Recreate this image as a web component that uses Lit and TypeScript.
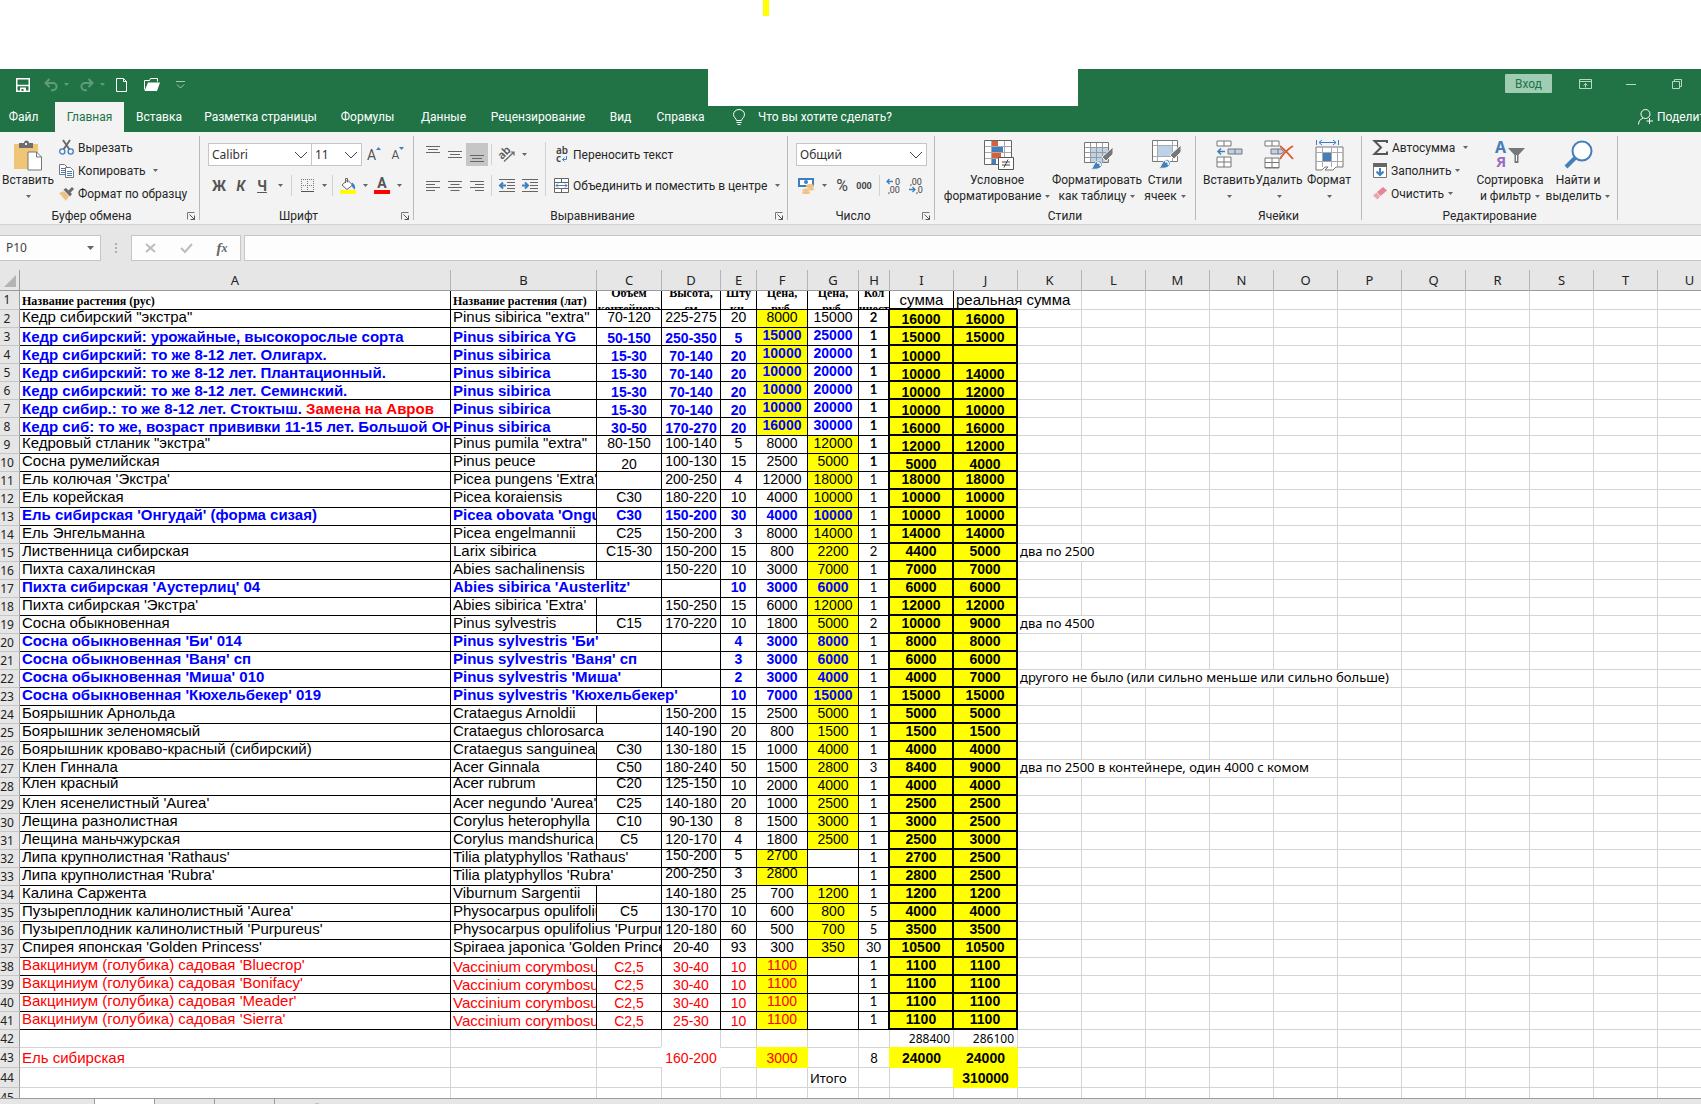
import { LitElement, html, svg, css, nothing, type TemplateResult } from "lit";
import { customElement } from "lit/decorators.js";
import { classMap } from "lit/directives/class-map.js";

const COLUMNS = "ABCDEFGHIJKLMNOPQRSTU".split("");

const ROWS: string[][] = [
  ["Название растения (рус)", "Название растения (лат)", "Объем контейнера", "Высота, см", "Шту ки,", "Цена, руб.", "Цена, руб.", "Кол ичест", "сумма", "реальная сумма"],
  ['Кедр сибирский "экстра"', 'Pinus sibirica "extra"', "70-120", "225-275", "20", "8000", "15000", "2", "16000", "16000"],
  ["Кедр сибирский: урожайные, высокорослые сорта", "Pinus sibirica YG", "50-150", "250-350", "5", "15000", "25000", "1", "15000", "15000"],
  ["Кедр сибирский: то же 8-12 лет. Олигарх.", "Pinus sibirica", "15-30", "70-140", "20", "10000", "20000", "1", "10000", ""],
  ["Кедр сибирский: то же 8-12 лет. Плантационный.", "Pinus sibirica", "15-30", "70-140", "20", "10000", "20000", "1", "10000", "14000"],
  ["Кедр сибирский: то же 8-12 лет. Семинский.", "Pinus sibirica", "15-30", "70-140", "20", "10000", "20000", "1", "10000", "12000"],
  ["Кедр сибир.: то же 8-12 лет. Стоктыш. |Замена на Авров", "Pinus sibirica", "15-30", "70-140", "20", "10000", "20000", "1", "10000", "10000"],
  ["Кедр сиб: то же, возраст прививки 11-15 лет. Большой ОН.", "Pinus sibirica", "30-50", "170-270", "20", "16000", "30000", "1", "16000", "16000"],
  ['Кедровый стланик "экстра"', 'Pinus pumila "extra"', "80-150", "100-140", "5", "8000", "12000", "1", "12000", "12000"],
  ["Сосна румелийская", "Pinus peuce", "20", "100-130", "15", "2500", "5000", "1", "5000", "4000"],
  ["Ель колючая 'Экстра'", "Picea pungens 'Extra'", "", "200-250", "4", "12000", "18000", "1", "18000", "18000"],
  ["Ель корейская", "Picea koraiensis", "C30", "180-220", "10", "4000", "10000", "1", "10000", "10000"],
  ["Ель сибирская 'Онгудай' (форма сизая)", "Picea obovata 'Ongudai'", "C30", "150-200", "30", "4000", "10000", "1", "10000", "10000"],
  ["Ель Энгельманна", "Picea engelmannii", "C25", "150-200", "3", "8000", "14000", "1", "14000", "14000"],
  ["Лиственница сибирская", "Larix sibirica", "C15-30", "150-200", "15", "800", "2200", "2", "4400", "5000", "два по 2500"],
  ["Пихта сахалинская", "Abies sachalinensis", "", "150-220", "10", "3000", "7000", "1", "7000", "7000"],
  ["Пихта сибирская 'Аустерлиц' 04", "Abies sibirica 'Austerlitz'", "", "", "10", "3000", "6000", "1", "6000", "6000"],
  ["Пихта сибирская 'Экстра'", "Abies sibirica 'Extra'", "", "150-250", "15", "6000", "12000", "1", "12000", "12000"],
  ["Сосна обыкновенная", "Pinus sylvestris", "C15", "170-220", "10", "1800", "5000", "2", "10000", "9000", "два по 4500"],
  ["Сосна обыкновенная 'Би' 014", "Pinus sylvestris 'Би'", "", "", "4", "3000", "8000", "1", "8000", "8000"],
  ["Сосна обыкновенная 'Ваня' сп", "Pinus sylvestris 'Ваня' сп", "", "", "3", "3000", "6000", "1", "6000", "6000"],
  ["Сосна обыкновенная 'Миша' 010", "Pinus sylvestris 'Миша'", "", "", "2", "3000", "4000", "1", "4000", "7000", "другого не было (или сильно меньше или сильно больше)"],
  ["Сосна обыкновенная 'Кюхельбекер' 019", "Pinus sylvestris 'Кюхельбекер'", "", "", "10", "7000", "15000", "1", "15000", "15000"],
  ["Боярышник Арнольда", "Crataegus Arnoldii", "", "150-200", "15", "2500", "5000", "1", "5000", "5000"],
  ["Боярышник зеленомясый", "Crataegus chlorosarca", "", "140-190", "20", "800", "1500", "1", "1500", "1500"],
  ["Боярышник кроваво-красный (сибирский)", "Crataegus sanguinea", "C30", "130-180", "15", "1000", "4000", "1", "4000", "4000"],
  ["Клен Гиннала", "Acer Ginnala", "C50", "180-240", "50", "1500", "2800", "3", "8400", "9000", "два по 2500 в контейнере, один 4000 с комом"],
  ["Клен красный", "Acer rubrum", "C20", "125-150", "10", "2000", "4000", "1", "4000", "4000"],
  ["Клен ясенелистный 'Aurea'", "Acer negundo 'Aurea'", "C25", "140-180", "20", "1000", "2500", "1", "2500", "2500"],
  ["Лещина разнолистная", "Corylus heterophylla", "C10", "90-130", "8", "1500", "3000", "1", "3000", "2500"],
  ["Лещина маньчжурская", "Corylus mandshurica", "C5", "120-170", "4", "1800", "2500", "1", "2500", "3000"],
  ["Липа крупнолистная 'Rathaus'", "Tilia platyphyllos 'Rathaus'", "", "150-200", "5", "2700", "", "1", "2700", "2500"],
  ["Липа крупнолистная 'Rubra'", "Tilia platyphyllos 'Rubra'", "", "200-250", "3", "2800", "", "1", "2800", "2500"],
  ["Калина Саржента", "Viburnum Sargentii", "", "140-180", "25", "700", "1200", "1", "1200", "1200"],
  ["Пузыреплодник калинолистный 'Aurea'", "Physocarpus opulifolius 'Aurea'", "C5", "130-170", "10", "600", "800", "5", "4000", "4000"],
  ["Пузыреплодник калинолистный 'Purpureus'", "Physocarpus opulifolius 'Purpureus'", "", "120-180", "60", "500", "700", "5", "3500", "3500"],
  ["Спирея японская 'Golden Princess'", "Spiraea japonica 'Golden Princess'", "", "20-40", "93", "300", "350", "30", "10500", "10500"],
  ["Вакциниум (голубика) садовая 'Bluecrop'", "Vaccinium corymbosum", "C2,5", "30-40", "10", "1100", "", "1", "1100", "1100"],
  ["Вакциниум (голубика) садовая 'Bonifacy'", "Vaccinium corymbosum", "C2,5", "30-40", "10", "1100", "", "1", "1100", "1100"],
  ["Вакциниум (голубика) садовая 'Meader'", "Vaccinium corymbosum", "C2,5", "30-40", "10", "1100", "", "1", "1100", "1100"],
  ["Вакциниум (голубика) садовая 'Sierra'", "Vaccinium corymbosum", "C2,5", "25-30", "10", "1100", "", "1", "1100", "1100"],
  ["", "", "", "", "", "", "", "", "288400", "286100"],
  ["Ель сибирская", "", "", "160-200", "", "3000", "", "8", "24000", "24000"],
  ["", "", "", "", "", "", "Итого", "", "", "310000"],
  [],
];

/* How many columns the text of a cell runs across. */
const SPANS: Record<string, number> = {
  B17: 2, B20: 2, B21: 2, B22: 2, B23: 3, B25: 2, B32: 2, B33: 2, B36: 2, B37: 2,
  K15: 2, K19: 2, K22: 6, K27: 5,
};

const BLUE_ROWS = new Set([3, 4, 5, 6, 7, 8, 13, 17, 20, 21, 22, 23]);

function cellClasses(col: string, row: number): Record<string, boolean> {
  const main = "ABCDEFG".includes(col);
  const sums = col === "I" || col === "J";
  const inTable = row >= 2 && row <= 41;
  const between = (a: number, b: number) => row >= a && row <= b;
  const yellow =
    (col === "F" && (between(2, 8) || between(32, 33) || between(38, 41))) ||
    (col === "G" && (between(9, 31) || between(34, 37))) ||
    (sums && inTable);
  const loose = (row === 43 && (col === "F" || sums)) || (row === 44 && col === "J");
  const up = (row === 28 && "ABCD".includes(col)) || (between(32, 33) && "DEF".includes(col));
  const low =
    (between(3, 8) && "CDE".includes(col)) || (between(4, 10) && sums) || (row === 10 && col === "C") ||
    (row === 1 && "AB".includes(col)) || between(43, 44);
  const mid =
    (between(3, 8) && "AB".includes(col)) || (between(2, 3) && sums) ||
    (between(38, 41) && "BCDE".includes(col)) || (row === 1 && sums) || row === 42 || row === 45;
  return {
    center: !("ABK".includes(col) || (col === "J" && row === 1) || (row === 44 && col === "G")),
    right: row === 42,
    names: col === "A" || col === "B" || (sums && row === 1),
    ruled: between(1, 41) && (main || col === "H" || (sums && row > 1)),
    thick: sums && inTable,
    "thick-right": col === "H" && inTable,
    "thick-bottom": sums && row === 1,
    "plain-right": col === "J" && row === 1,
    "thin-right": col === "I" && row === 1,
    blue: main && BLUE_ROWS.has(row),
    red: main && between(38, 43),
    bold: (sums && row > 1 && row !== 42) || (col === "H" && between(2, 10)),
    small: col === "H",
    note: col === "K" || (row === 44 && col === "G"),
    total: row === 42,
    serif: row === 1 && (main || col === "H"),
    wrap: row === 1 && "CDEFGH".includes(col),
    yellow,
    loose,
    blank: row === 43 && col === "D",
    up,
    low,
    mid,
  };
}

const icon = (w: number, h: number, body: TemplateResult) =>
  html`<svg width=${w} height=${h} viewBox="0 0 ${w} ${h}" fill="none" aria-hidden="true">${body}</svg>`;

const caret = icon(5, 3, svg`<path d="M0 0h5L2.500 3z" fill="#666"/>`);
const chevron = icon(14, 8, svg`<path d="M1 1l6 6 6-6" stroke="#444"/>`);

const I = {
  save: icon(14, 14, svg`<path d="M.75.75h12.500v12.500H.75z" stroke="#fff" stroke-width="1.500"/><path d="M1 7.500h12" stroke="#fff" stroke-width="1.500"/><path d="M4 13v-3.500h6V13" fill="#fff"/><path d="M5.500 11h2v2h-2z" fill="#217346"/>`),
  undo: icon(14, 13, svg`<path d="M5.500 1L1.500 5l4 4M2 5h7a3.600 3.600 0 010 7.200H7" stroke="#5f9c7b" stroke-width="2"/>`),
  redo: icon(14, 13, svg`<path d="M8.500 1l4 4-4 4M12 5H5a3.600 3.600 0 000 7.200h2" stroke="#5f9c7b" stroke-width="2"/>`),
  dimCaret: icon(5, 3, svg`<path d="M0 0h5L2.500 3z" fill="#5f9c7b"/>`),
  file: icon(12, 14, svg`<path d="M.5.5h7l3 3v10H.5zM7.500.5v3h3" stroke="#fff"/>`),
  folder: icon(16, 13, svg`<path d="M.5 11.500v-9h5l1-2h7v3" stroke="#fff"/><path d="M4 4.500h12L13 13H.5z" fill="#fff"/>`),
  more: icon(9, 8, svg`<path d="M0 .5h9M1 3.500l3.500 3.500L8 3.500" stroke="#9fcdb3"/>`),
  ribbonToggle: icon(13, 10, svg`<path d="M.5.5h12v9H.5zM0 2.500h13M6.500 8.500v-4M4.500 6.500l2-2 2 2" stroke="#b5d9c4"/>`),
  minimize: icon(10, 10, svg`<path d="M0 5.500h10" stroke="#b5d9c4"/>`),
  restore: icon(10, 10, svg`<path d="M.5 2.500h7v7h-7zM2.500 2V.5h7v7H8" stroke="#b5d9c4"/>`),
  bulb: icon(12, 16, svg`<path d="M3.500 11.500c0-2-3-3-3-6a5.500 5 0 0111 0c0 3-3 4-3 6zM3.500 13.500h5M4.500 15.500h3" stroke="#fff"/>`),
  share: icon(15, 16, svg`<circle cx="7.500" cy="5" r="4.500" stroke="#fff"/><path d="M.5 15.500c0-3 2-5.500 4.500-6.500M11.500 9v6M8.500 12h6.500" stroke="#fff"/>`),
  paste: icon(30, 31, svg`<path d="M1 4h24v25H1z" fill="#efc677"/><path d="M6 3h5a2.500 2.500 0 015 0h4v5H6z" fill="#6d6d6d"/><path d="M12 3h2v2h-2z" fill="#f3f3f3"/><path d="M15 12h8.500l5 5v13H15z" fill="#fff" stroke="#777"/><path d="M23.500 12v5h5" stroke="#777"/>`),
  cut: icon(15, 15, svg`<path d="M4 0l6.500 9.500M11 0L4.500 9.500" stroke="#6a6a6a" stroke-width="2"/><circle cx="3.300" cy="11.500" r="2.600" stroke="#3f7fc0" stroke-width="1.300"/><circle cx="11.700" cy="11.500" r="2.600" stroke="#3f7fc0" stroke-width="1.300"/>`),
  copy: icon(15, 14, svg`<path d="M.5.5h5l3 3v7h-8z" fill="#fff" stroke="#777"/><path d="M2 4.500h4M2 6.500h4M2 8.500h4" stroke="#3f7fc0"/><path d="M6.500 3.500h5l3 3v7h-8z" fill="#fff" stroke="#777"/><path d="M8 7.500h5M8 9.500h5M8 11.500h5" stroke="#3f7fc0"/>`),
  brush: icon(15, 14, svg`<path d="M0 6l5-2 5 5-3 5z" fill="#efc283"/><path d="M4.500 2.500L7 1l6 6-2 2.500z" fill="#6a6a6a"/><path d="M10 5l4-4" stroke="#6a6a6a" stroke-width="3"/>`),
  launcher: icon(8, 8, svg`<path d="M.5 7.500V.5h7" stroke="#777"/><path d="M2.500 2.500l5 5M7.500 3.500v4h-4" stroke="#555"/>`),
  upMark: icon(5, 3, svg`<path d="M0 3h5L2.500 0z" fill="#3f7fc0"/>`),
  downMark: icon(5, 3, svg`<path d="M0 0h5L2.500 3z" fill="#3f7fc0"/>`),
  borders: icon(13, 13, svg`<path d="M.5 0v12M6.500 0v12M12.500 0v12M0 .5h13M0 6.500h13" stroke="#777" stroke-dasharray="1 1"/><path d="M0 12.500h13" stroke="#555"/>`),
  fill: icon(16, 16, svg`<path d="M0 12h16v4H0z" fill="#ff0"/><path d="M2 7l5.500-5 5 5-5.500 4.500z" fill="#fff" stroke="#666"/><path d="M5.500 5V.500h2v4" stroke="#666"/><path d="M12 5c2 1 3 3 2.500 6-1.500-1-2.500-3-2.500-6z" fill="#3f7fc0" stroke="#3f7fc0"/>`),
  top: icon(14, 7, svg`<path d="M0 .5h14M2 3.500h10M0 6.500h14" stroke="#666"/>`),
  left: icon(14, 10, svg`<path d="M0 .5h14M0 3.500h9M0 6.500h14M0 9.500h9" stroke="#666"/>`),
  middle: icon(14, 10, svg`<path d="M0 .5h14M2.500 3.500h9M0 6.500h14M2.500 9.500h9" stroke="#666"/>`),
  rightAl: icon(14, 10, svg`<path d="M0 .5h14M5 3.500h9M0 6.500h14M5 9.500h9" stroke="#666"/>`),
  orient: icon(17, 15, svg`<g transform="rotate(-45 8 8)"><text x="1" y="8" font-size="11" font-weight="600" font-family="Noto Sans, sans-serif" fill="#555">ab</text></g><path d="M5 14.500L15 5M11.500 5H15v3.500" stroke="#666" stroke-width="1.200"/>`),
  outdent: icon(16, 13, svg`<path d="M0 .5h16M8 3.500h8M8 6.500h8M8 9.500h8M0 12.500h16" stroke="#666"/><path d="M1 6.500h6M4 3.500l-3 3 3 3" stroke="#3f7fc0" stroke-width="2"/>`),
  indent: icon(16, 13, svg`<path d="M0 .5h16M8 3.500h8M8 6.500h8M8 9.500h8M0 12.500h16" stroke="#666"/><path d="M0 6.500h6M3 3.500l3 3-3 3" stroke="#3f7fc0" stroke-width="2"/>`),
  wrap: icon(15, 16, svg`<text x="2" y="7" font-size="10" font-weight="600" font-family="Noto Sans, sans-serif" fill="#444">ab</text><text x="2" y="15" font-size="10" font-weight="600" font-family="Noto Sans, sans-serif" fill="#444">c</text><path d="M12.500 9v3.500H8.500M10.500 10.500l-2 2 2 2" stroke="#3f7fc0"/>`),
  merge: icon(15, 15, svg`<path d="M.5.5h14v14H.5zM.5 4.500h14M.5 10.500h14M7.500.5v4M7.500 10.500v4" stroke="#666" fill="#fff"/><path d="M2 7.500h11M4 5.500l-2 2 2 2M11 5.500l2 2-2 2" stroke="#3f7fc0"/>`),
  money: icon(16, 16, svg`<path d="M1 1h14v7H1z" fill="#fff" stroke="#3f7fc0" stroke-width="2"/><circle cx="8" cy="4" r="2" fill="#3f7fc0"/><ellipse cx="12" cy="8" rx="4" ry="2" fill="#efc283"/><ellipse cx="12" cy="11" rx="4" ry="1.500" fill="#efc283"/><ellipse cx="8" cy="12" rx="4" ry="1.500" fill="#efc283" stroke="#f3f3f3" stroke-width=".5"/><ellipse cx="8" cy="14.500" rx="4" ry="1.500" fill="#efc283"/>`),
  moreDec: icon(15, 16, svg`<text x="8" y="7" font-size="9" font-family="Roboto, sans-serif" fill="#444">0</text><text x="1" y="15" font-size="9" font-family="Roboto, sans-serif" fill="#444">,00</text><path d="M0 3.500h6M2.500 1L0 3.500 2.500 6" stroke="#3f7fc0" stroke-width="1.300"/>`),
  lessDec: icon(15, 16, svg`<text x="1" y="7" font-size="9" font-family="Roboto, sans-serif" fill="#444">,00</text><text x="7" y="15" font-size="9" font-family="Roboto, sans-serif" fill="#444">,0</text><path d="M0 11.500h6M3.500 9L6 11.500 3.500 14" stroke="#3f7fc0" stroke-width="1.300"/>`),
  cond: icon(30, 30, svg`<path d="M.5.500h27v24H.5z" fill="#fff"/><path d="M8 1h6v5H8zM8 13h9v5H8z" fill="#d8613c"/><path d="M8 7h11v5H8zM8 19h4v5H8z" fill="#457fb9"/><path d="M7.500 0v25M20.500 0v25M0 6.500h28M0 12.500h28M0 18.500h28" stroke="#aaa"/><path d="M.5.500h27v24H.5z" stroke="#666"/><path d="M14.500 17.500h15v12h-15z" fill="#fff" stroke="#555"/><path d="M18 22h8M18 25h8M24 19.500l-4 8" stroke="#444"/>`),
  asTable: icon(30, 29, svg`<path d="M.5 2.500h24v20H.5z" fill="#fff"/><path d="M7 8h18v14H7z" fill="#bdd2e8"/><path d="M6.500 2v20M12.500 2v20M18.500 2v20M0 7.500h25M0 12.500h25M0 17.500h25" stroke="#999"/><path d="M.5 2.500h24v20H.5z" stroke="#777"/><path d="M29 7v7l-7 7-4-4z" fill="#777" stroke="#f3f3f3"/><path d="M6 29c4 0 3-7 8-8 4-1 6 4 2 7-3 2-7 1-10 1z" fill="#457fb9" stroke="#f3f3f3"/><path d="M13 23c3-1 4 1 3 3" stroke="#fff" stroke-width="1.500"/>`),
  cellStyles: icon(30, 29, svg`<path d="M.5.500h25v21H.5z" fill="#fff"/><path d="M5.500 0v22M20.500 0v22M0 5.500h26M0 16.500h26" stroke="#aaa"/><path d="M6 6h14v10H6z" fill="#bdd2e8"/><path d="M.5.500h25v21H.5z" stroke="#777"/><path d="M29 5v7l-7 7-4-4z" fill="#777" stroke="#f3f3f3"/><path d="M6 28c4 0 3-7 8-8 4-1 6 4 2 7-3 2-7 1-10 1z" fill="#457fb9" stroke="#f3f3f3"/><path d="M13 22c3-1 4 1 3 3" stroke="#fff" stroke-width="1.500"/>`),
  insert: icon(27, 28, svg`<path d="M1 1h14v5H1zM8 1v5M1 17h14v10H1zM8 17v10M1 22h14" stroke="#777" fill="#fff"/><path d="M12 9h14v5H12zM19 9v5" fill="#bdd2e8" stroke="#777"/><path d="M2 11.500h7M5 8.500l-3 3 3 3" stroke="#3f7fc0" stroke-width="1.600"/>`),
  remove: icon(30, 28, svg`<path d="M1 1h14v5H1zM8 1v5M1 18h14v10H1zM8 18v9M1 22.500h14M1 27.500h14" stroke="#777" fill="#fff"/><path d="M7 9h10l3 2.500-3 2.500H7zM14 9v5" fill="#bdd2e8" stroke="#777"/><path d="M16 6c5 4 9 8 13 13M29 6c-5 3-10 8-13 13" stroke="#d8613c" stroke-width="2"/>`),
  format: icon(29, 31, svg`<path d="M1.500 0v5M23.500 0v5M4 2.500h17M7 0L4 2.500 7 5M18 0l3 2.500L18 5" stroke="#3f7fc0"/><path d="M1 7h27v20h-7l-3 3H10l3-3h-3l-3 3H1z" fill="#fff" stroke="#777"/><path d="M7.500 7v20M16.500 7v20M22.500 7v20M1 12.500h27M1 21.500h27" stroke="#aaa"/><path d="M8 13h8v8H8z" fill="#457fb9"/>`),
  sigma: icon(15, 15, svg`<path d="M14 3V1H1.500L8 7.500 1.500 14H14v-2.500" stroke="#555" stroke-width="2"/>`),
  fillDown: icon(14, 15, svg`<path d="M.5.500h13v14H.5z" fill="#fff" stroke="#777"/><path d="M0 0h14v4H0z" fill="#666"/><path d="M7 5v7M3.500 8.500L7 12l3.500-3.500" stroke="#3f7fc0" stroke-width="2"/>`),
  eraser: icon(14, 13, svg`<path d="M4 5l6-5 4 3.500L7.500 9z" fill="#e88394"/><path d="M0 8.500L3.500 5.500 7 9.500 4.500 12.500z" fill="#eea3b0"/>`),
  sort: icon(31, 29, svg`<text x="0" y="13" font-size="16" font-weight="700" font-family="Noto Sans, sans-serif" fill="#457fb9">А</text><text x="1" y="27" font-size="15" font-weight="700" font-family="Noto Sans, sans-serif" fill="#9b6bc2">Я</text><path d="M13 8h17l-6.500 7v8h-4v-8z" fill="#777"/><path d="M21 15h1v6h-1z" fill="#fff"/>`),
  find: icon(29, 29, svg`<circle cx="18" cy="11" r="9.500" fill="#fff" stroke="#457fb9" stroke-width="2"/><path d="M11 18l-9 9" stroke="#457fb9" stroke-width="4"/>`),
  cross: icon(11, 10, svg`<path d="M1 1l9 8M10 1L1 9" stroke="#bcbcbc" stroke-width="2"/>`),
  tick: icon(13, 10, svg`<path d="M1 5l4 4 7-8" stroke="#bcbcbc" stroke-width="2"/>`),
};

@customElement("app-root")
export class AppRoot extends LitElement {
  static styles = css`
    :host {
      display: block;
      font-family: Roboto, "Noto Sans", sans-serif;
      font-size: 12px;
      line-height: 16px;
      color: #262626;
    }
    * { box-sizing: border-box; }
    svg { display: block; flex: none; overflow: visible; }
    button, input, select {
      font: inherit; color: inherit; background: none; border: 0; margin: 0; padding: 0; border-radius: 0;
    }
    button { display: flex; align-items: center; justify-content: center; white-space: nowrap; }
    .page { display: flex; flex-direction: column; min-height: 100vh; overflow: hidden; background: #fff; }
    .top-space { height: 69px; padding-left: 763px; }
    .mark { width: 6px; height: 16px; background: #ff0; }
    .head { position: relative; background: #217346; color: #fff; }
    .doc-title { position: absolute; left: 708px; top: 0; width: 370px; height: 37px; background: #fff; }
    .title-bar { display: flex; align-items: center; height: 33px; padding: 0 1px 2px 16px; }
    .qa { height: 24px; justify-content: flex-start; }
    .q16 { width: 16px; } .q20 { width: 20px; } .q28 { width: 28px; } .q32 { width: 32px; }
    .push { flex: 1; }
    .login { width: 47px; height: 19px; margin: 0 10px 2px 0; background: #9fcdb3; color: #217346; border-radius: 1px; }
    .win { width: 46px; height: 24px; margin-bottom: 2px; }
    .tabs { display: grid; grid-template-columns: 55px 69px 70px 133px 81px 71px 118px 47px 73px auto 1fr auto; height: 30px; }
    .tab { color: #fff; text-decoration: none; display: flex; align-items: center; justify-content: center; }
    .tab:first-child { padding-right: 8px; }
    .tab.on { background: #f3f3f3; color: #217346; }
    .tell { gap: 13px; padding-left: 16px; }
    .share { gap: 4px; width: 63px; justify-content: flex-start; overflow: hidden; }
    .ribbon { display: flex; height: 93px; padding-top: 4px; background: #f3f3f3; border-bottom: 1px solid #d2d2d2; }
    .group { display: flex; flex-direction: column; border-right: 1px solid #b9b9b9; height: 84px; flex: none; }
    .body { flex: 1; display: flex; align-items: flex-start; }
    .foot { display: flex; align-items: center; height: 16px; margin-bottom: -4px; }
    .foot span { flex: 1; text-align: center; }
    .foot button { width: 16px; height: 16px; justify-content: flex-start; padding-left: 4px; }
    .g1 { width: 200px; } .g2 { width: 214px; } .g3 { width: 374px; } .g4 { width: 147px; }
    .g5 { width: 261px; } .g6 { width: 166px; } .g7 { width: 256px; }
    .big { flex-direction: column; justify-content: flex-start; padding-top: 4px; height: 68px; }
    .big .pic { height: 33px; display: flex; align-items: flex-start; }
    .g5 .pic { padding-left: 4px; }
    .big .line { display: flex; align-items: center; height: 16px; gap: 4px; }
    .b56 { width: 56px; } .b50 { width: 50px; } .b108 { width: 108px; } .b92 { width: 92px; } .b44 { width: 44px; } .b68 { width: 68px; }
    .stack { display: flex; flex-direction: column; padding-left: 3px; }
    .item { height: 23px; justify-content: flex-start; gap: 4px; }
    .item .far { margin-left: 4px; }
    .lines { display: flex; flex-direction: column; gap: 8px; padding-top: 7px; }
    .line-row { display: flex; align-items: center; height: 23px; }
    .pad8 { padding-left: 8px; }
    .pad-end { padding-right: 5px; }
    .box { position: relative; display: flex; align-items: center; height: 23px; background: #fff; border: 1px solid #c6c6c6; }
    .box + .box { border-left: 0; }
    .box select { appearance: none; width: 100%; height: 100%; padding-left: 3px; color: #333; font-family: "Noto Sans", sans-serif; font-size: 12px; }
    .box svg { position: absolute; right: 3px; pointer-events: none; }
    .w104 { width: 104px; } .w50 { width: 50px; } .w131 { width: 131px; }
    .i22 { width: 22px; height: 23px; } .i24 { width: 24px; height: 23px; } .i16 { width: 16px; height: 23px; }
    .i20 { width: 20px; height: 23px; } .i10 { width: 10px; height: 23px; }
    .on-grey { background: #c6c6c6; }
    .low-align { align-items: flex-end; padding-bottom: 4px; }
    .high-align { align-items: flex-start; padding-top: 3px; }
    .bar { width: 1px; height: 21px; margin: 0 3px; background: #d2d2d2; flex: none; }
    .bar.tall { height: 54px; margin: 6px 0 0 4px; }
    .glyph { font-weight: 700; font-size: 14px; color: #555; }
    .it { font-style: italic; }
    .un { text-decoration: underline; }
    .grow { font-size: 14px; color: #555; }
    .grow svg { align-self: flex-start; margin-top: 4px; }
    .shrink { font-size: 12px; }
    .font-color { flex-direction: column; color: #555; font-weight: 700; font-size: 14px; line-height: 13px; }
    .font-color i { display: block; width: 16px; height: 4px; background: red; }
    .pct { font-size: 16px; color: #444; }
    .thousand { font-size: 9px; color: #444; font-weight: 700; }
    .formula { display: flex; height: 45px; padding: 10px 0 9px; background: #e6e6e6; }
    .name-box { position: relative; display: flex; align-items: center; width: 101px; background: #fdfdfd; border: 1px solid #c6c6c6; border-left: 0; }
    .name-box input { width: 80px; padding-left: 6px; font-family: "Noto Sans", sans-serif; font-size: 12px; color: #444; }
    .name-box svg { position: absolute; right: 6px; }
    .dots { display: flex; flex-direction: column; gap: 2px; justify-content: center; width: 30px; padding-left: 14px; }
    .dots i { width: 2px; height: 2px; background: #b0b0b0; }
    .fx-box { display: flex; width: 110px; border: 1px solid #c6c6c6; background: #fdfdfd; }
    .fx-box button { flex: 1; }
    .fx { font-family: "Liberation Serif", serif; font-style: italic; font-weight: 700; font-size: 15px; color: #666; }
    .fx small { font-size: 12px; }
    .entry { flex: 1; margin-left: 3px; border: 1px solid #c6c6c6; border-right: 0; background: #fdfdfd; min-width: 0; }
    .sheet { flex: 1; overflow: hidden; }
    table { table-layout: fixed; border-collapse: separate; border-spacing: 0; width: 1722px; color: #000;
      font-family: "Liberation Sans", Arial, sans-serif; font-size: 14px; }
    .c-n { width: 20px; } .c-a { width: 431px; } .c-b { width: 146px; } .c-c { width: 65px; } .c-d { width: 59px; }
    .c-e { width: 36px; } .c-f, .c-g { width: 51px; } .c-h { width: 31px; } .c-w { width: 64px; }
    th, td { padding: 0; height: 18px; font-weight: 400; text-align: left; white-space: nowrap; overflow: hidden; }
    th { font-family: "Noto Sans", sans-serif; font-size: 13px; line-height: 18px; color: #222; background: #e6e6e6; text-align: center; }
    thead th { height: 21px; line-height: 20px; border-right: 1px solid #b4b4b4; border-bottom: 1px solid #9b9b9b; }
    thead .corner { border-right-color: #9b9b9b; vertical-align: bottom; }
    .corner svg { margin: 0 0 3px 4px; }
    tbody th { border-right: 1px solid #9b9b9b; border-bottom: 1px solid #c6c6c6; font-size: 12px; }
    td { border-right: 1px solid #d4d4d4; border-bottom: 1px solid #d4d4d4; }
    td div, tbody th div { height: 17px; line-height: 14px; padding: 0 2px; overflow: hidden; }
    tbody th div { padding: 0 5px 0 0; line-height: 18px; display: flex; justify-content: center; }
    .first td, .first th { height: 19px; }
    .first td div, .first th div { height: 18px; }
    .tall-row td, .tall-row th { height: 20px; }
    .tall-row td div, .tall-row th div { height: 19px; }
    .tall-row th div { line-height: 20px; }
    .last-row td, .last-row th { height: 10px; border-bottom: 0; }
    .last-row td div, .last-row th div { height: 9px; }
    td.names { font-size: 15px; }
    td.center div { text-align: center; padding: 0; }
    td.right div { text-align: right; }
    td.mid div { line-height: 18px; }
    td.low div { line-height: 20px; }
    td.up div { line-height: 10px; }
    td.ruled { border-color: #000; }
    td.thick { border-right-width: 2px; border-bottom-width: 2px; }
    td.thick div { height: 16px; }
    td.thick-right { border-right-width: 2px; }
    td.thick-bottom { border-bottom: 2px solid #000; }
    .first td.thick-bottom div { height: 17px; }
    td.thin-right { border-right-color: #000; }
    td.plain-right { border-right-color: transparent; overflow: visible; }
    td.plain-right div { overflow: visible; }
    td.blue { color: #00f; font-weight: 700; }
    td.red, .red-text { color: #f00; }
    td.bold { font-weight: 700; }
    td.small { font-family: Lato, "Noto Sans", sans-serif; font-size: 13px; }
    td.note { font-family: "Noto Sans", sans-serif; font-size: 13px; }
    td.total { font-family: "Noto Sans", sans-serif; font-size: 12px; }
    td.total div { padding: 0 3px 0 0; }
    td.serif { font-family: "Liberation Serif", "Times New Roman", serif; font-weight: 700; font-size: 12px; }
    td.wrap { white-space: normal; }
    td.wrap div { display: flex; align-items: center; justify-content: center; line-height: 16px; padding-top: 2px; }
    td.yellow { background: #ff0; }
    td.loose { position: relative; background: #ff0; border-color: #ff0; box-shadow: -1px -1px 0 #ff0; }
    td.blank { position: relative; border-color: #fff; box-shadow: -1px -1px 0 #fff; }
    .sheet-tabs { display: flex; height: 7px; background: #e6e6e6; border-top: 1px solid #9b9b9b; overflow: hidden; }
    .sheet-tabs div { height: 7px; border-right: 1px solid #9b9b9b; }
    .t95 { width: 95px; } .t60 { width: 60px; }
    .sheet-tabs .active { background: #fff; margin-top: -1px; }
    .sheet-tabs svg { margin: 4px 0 0 34px; }
  `;

  private big(cls: string, pic: TemplateResult, first: string, second?: string) {
    return html`<button class="big ${cls}">
      <span class="pic">${pic}</span><span class="line">${first}</span>
      <span class="line">${second ?? nothing}${caret}</span>
    </button>`;
  }

  private foot(label: string, launcher = true) {
    return html`<div class="foot"><span>${label}</span>${launcher
      ? html`<button aria-label="${label}: параметры">${I.launcher}</button>` : nothing}</div>`;
  }

  private iconButton(cls: string, label: string, content: unknown) {
    return html`<button class=${cls} aria-label=${label}>${content}</button>`;
  }

  private renderHead() {
    const tabs = ["Файл", "Главная", "Вставка", "Разметка страницы", "Формулы", "Данные", "Рецензирование", "Вид", "Справка"];
    return html`<header class="head">
      <div class="title-bar">
        ${this.iconButton("qa q28", "Сохранить", I.save)}
        ${this.iconButton("qa q20", "Отменить", I.undo)}
        ${this.iconButton("qa q16", "Список отмены", I.dimCaret)}
        ${this.iconButton("qa q20", "Вернуть", I.redo)}
        ${this.iconButton("qa q16", "Список возврата", I.dimCaret)}
        ${this.iconButton("qa q28", "Создать", I.file)}
        ${this.iconButton("qa q32", "Открыть", I.folder)}
        ${this.iconButton("qa q16", "Настройка панели", I.more)}
        <span class="push"></span>
        <button class="login">Вход</button>
        ${this.iconButton("win", "Параметры ленты", I.ribbonToggle)}
        ${this.iconButton("win", "Свернуть", I.minimize)}
        ${this.iconButton("win", "Восстановить", I.restore)}
      </div>
      <nav class="tabs">
        ${tabs.map((t) => html`<a href="#" class=${classMap({ tab: true, on: t === "Главная" })}>${t}</a>`)}
        <button class="tell">${I.bulb}Что вы хотите сделать?</button>
        <span></span>
        <button class="share">${I.share}Поделиться</button>
      </nav>
      <div class="doc-title"></div>
    </header>`;
  }

  private renderRibbon() {
    return html`<section class="ribbon">
      <div class="group g1">
        <div class="body">
          ${this.big("b56", I.paste, "Вставить")}
          <div class="stack">
            <button class="item">${I.cut}Вырезать</button>
            <button class="item">${I.copy}Копировать<span class="far">${caret}</span></button>
            <button class="item">${I.brush}Формат по образцу</button>
          </div>
        </div>
        ${this.foot("Буфер обмена")}
      </div>
      <div class="group g2">
        <div class="body pad8"><div class="lines">
          <div class="line-row">
            <div class="box w104"><select aria-label="Шрифт"><option>Calibri</option></select>${chevron}</div>
            <div class="box w50"><select aria-label="Размер шрифта"><option>11</option></select>${chevron}</div>
            <button class="i24 grow" aria-label="Увеличить размер шрифта">A${I.upMark}</button>
            <button class="i24 grow shrink" aria-label="Уменьшить размер шрифта">A${I.downMark}</button>
          </div>
          <div class="line-row">
            <button class="i22 glyph">Ж</button>
            <button class="i22 glyph it">К</button>
            <button class="i20 glyph un">Ч</button>
            ${this.iconButton("i16", "Вид подчеркивания", caret)}
            <span class="bar"></span>
            ${this.iconButton("i24", "Границы", I.borders)}
            ${this.iconButton("i10", "Вид границ", caret)}
            <span class="bar"></span>
            ${this.iconButton("i24", "Цвет заливки", I.fill)}
            ${this.iconButton("i10", "Выбор заливки", caret)}
            <button class="i24 font-color" aria-label="Цвет текста">A<i></i></button>
            ${this.iconButton("i10", "Выбор цвета", caret)}
          </div>
        </div></div>
        ${this.foot("Шрифт")}
      </div>
      <div class="group g3">
        <div class="body pad8">
          <div class="lines">
            <div class="line-row">
              ${this.iconButton("i22 high-align", "По верхнему краю", I.top)}
              ${this.iconButton("i22", "По середине", I.top)}
              ${this.iconButton("i22 on-grey low-align", "По нижнему краю", I.top)}
              <span class="bar"></span>
              ${this.iconButton("i24", "Ориентация", I.orient)}
              ${this.iconButton("i10", "Варианты ориентации", caret)}
            </div>
            <div class="line-row">
              ${this.iconButton("i22", "По левому краю", I.left)}
              ${this.iconButton("i22", "По центру", I.middle)}
              ${this.iconButton("i22", "По правому краю", I.rightAl)}
              <span class="bar"></span>
              ${this.iconButton("i24", "Уменьшить отступ", I.outdent)}
              ${this.iconButton("i22", "Увеличить отступ", I.indent)}
            </div>
          </div>
          <span class="bar tall"></span>
          <div class="lines pad8">
            <button class="item">${I.wrap}Переносить текст</button>
            <button class="item">${I.merge}Объединить и поместить в центре<span class="far">${caret}</span></button>
          </div>
        </div>
        ${this.foot("Выравнивание")}
      </div>
      <div class="group g4">
        <div class="body pad8"><div class="lines">
          <div class="box w131"><select aria-label="Числовой формат"><option>Общий</option></select>${chevron}</div>
          <div class="line-row">
            ${this.iconButton("i20", "Финансовый формат", I.money)}
            ${this.iconButton("i16", "Валюты", caret)}
            <button class="i20 pct">%</button>
            <button class="i24 thousand">000</button>
            <span class="bar"></span>
            ${this.iconButton("i22", "Увеличить разрядность", I.moreDec)}
            ${this.iconButton("i22", "Уменьшить разрядность", I.lessDec)}
          </div>
        </div></div>
        ${this.foot("Число")}
      </div>
      <div class="group g5">
        <div class="body pad8">
          ${this.big("b108", I.cond, "Условное", "форматирование")}
          ${this.big("b92", I.asTable, "Форматировать", "как таблицу")}
          ${this.big("b44", I.cellStyles, "Стили", "ячеек")}
        </div>
        ${this.foot("Стили", false)}
      </div>
      <div class="group g6">
        <div class="body pad8">
          ${this.big("b50", I.insert, "Вставить")}
          ${this.big("b50", I.remove, "Удалить")}
          ${this.big("b50", I.format, "Формат")}
        </div>
        ${this.foot("Ячейки", false)}
      </div>
      <div class="group g7">
        <div class="body pad8 pad-end">
          <div class="stack">
            <button class="item">${I.sigma}Автосумма<span class="far">${caret}</span></button>
            <button class="item">${I.fillDown}Заполнить${caret}</button>
            <button class="item">${I.eraser}Очистить${caret}</button>
          </div>
          <span class="push"></span>
          ${this.big("b68", I.sort, "Сортировка", "и фильтр")}
          ${this.big("b68", I.find, "Найти и", "выделить")}
        </div>
        ${this.foot("Редактирование", false)}
      </div>
    </section>`;
  }

  private renderFormula() {
    return html`<section class="formula">
      <div class="name-box"><input aria-label="Имя ячейки" value="P10" />${icon(7, 4, svg`<path d="M0 0h7L3.500 4z" fill="#666"/>`)}</div>
      <div class="dots"><i></i><i></i><i></i></div>
      <div class="fx-box">
        ${this.iconButton("", "Отмена", I.cross)}
        ${this.iconButton("", "Ввод", I.tick)}
        <button class="fx" aria-label="Вставить функцию">f<small>x</small></button>
      </div>
      <input class="entry" aria-label="Строка формул" />
    </section>`;
  }

  private renderRow(cells: string[], index: number) {
    const row = index + 1;
    const out: TemplateResult[] = [];
    for (let c = 0; c < COLUMNS.length; c++) {
      const col = COLUMNS[c];
      const span = SPANS[col + row] ?? 1;
      const [text, accent] = (cells[c] ?? "").split("|");
      out.push(html`<td class=${classMap(cellClasses(col, row))} colspan=${span}><div>${text}${accent
        ? html`<span class="red-text">${accent}</span>` : nothing}</div></td>`);
      c += span - 1;
    }
    const cls = { first: row === 1, "tall-row": row === 43 || row === 44, "last-row": row === 45 };
    return html`<tr class=${classMap(cls)}><th scope="row"><div>${row}</div></th>${out}</tr>`;
  }

  private renderSheet() {
    return html`<main class="sheet"><table>
      <colgroup>
        <col class="c-n" />
        ${COLUMNS.map((c) => html`<col class=${c < "I" ? "c-" + c.toLowerCase() : "c-w"} />`)}
      </colgroup>
      <thead><tr>
        <th class="corner">${icon(12, 12, svg`<path d="M12 0v12H0z" fill="#b4b4b4"/>`)}</th>
        ${COLUMNS.map((c) => html`<th scope="col">${c}</th>`)}
      </tr></thead>
      <tbody>${ROWS.map((r, i) => this.renderRow(r, i))}</tbody>
    </table></main>`;
  }

  render() {
    return html`<div class="page">
      <div class="top-space"><div class="mark"></div></div>
      ${this.renderHead()} ${this.renderRibbon()} ${this.renderFormula()} ${this.renderSheet()}
      <footer class="sheet-tabs">
        <div class="t95"></div><div class="t60 active"></div><div class="t60"></div><div class="t60"></div>
        ${icon(16, 16, svg`<circle cx="8" cy="8" r="7" stroke="#777"/>`)}
      </footer>
    </div>`;
  }
}
